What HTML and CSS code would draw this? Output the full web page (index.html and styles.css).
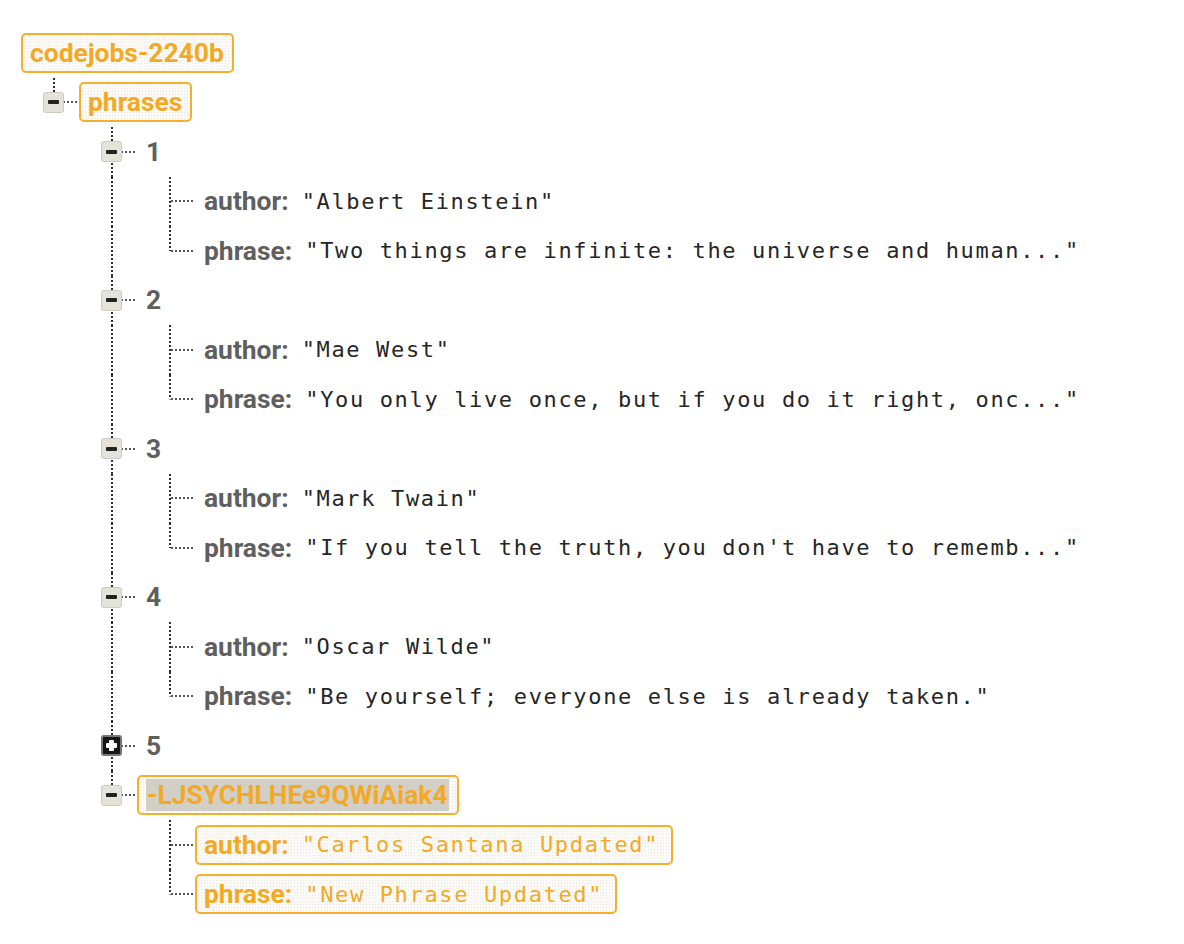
FILE: index.html
```html
<!DOCTYPE html>
<html>
<head>
<meta charset="utf-8">
<link rel="stylesheet" href="styles.css">
</head>
<body>
<div class="tree">
  <div class="row">
    <span class="label boxed"><span class="name">codejobs-2240b</span></span>
  </div>
  <div class="row">
    <div class="cell half"><span class="toggle"><span class="minus"></span></span></div>
    <span class="label boxed"><span class="name">phrases</span></span>
  </div>

  <div class="row">
    <div class="cell"></div>
    <div class="cell full"><span class="toggle"><span class="minus"></span></span></div>
    <span class="label"><span class="key">1</span></span>
  </div>
  <div class="row">
    <div class="cell"></div><div class="cell pipe"></div><div class="cell tee"></div>
    <span class="label"><span class="key">author:</span><span class="val">"Albert Einstein"</span></span>
  </div>
  <div class="row">
    <div class="cell"></div><div class="cell pipe"></div><div class="cell elbow"></div>
    <span class="label"><span class="key">phrase:</span><span class="val">"Two things are infinite: the universe and human..."</span></span>
  </div>

  <div class="row">
    <div class="cell"></div>
    <div class="cell full"><span class="toggle"><span class="minus"></span></span></div>
    <span class="label"><span class="key">2</span></span>
  </div>
  <div class="row">
    <div class="cell"></div><div class="cell pipe"></div><div class="cell tee"></div>
    <span class="label"><span class="key">author:</span><span class="val">"Mae West"</span></span>
  </div>
  <div class="row">
    <div class="cell"></div><div class="cell pipe"></div><div class="cell elbow"></div>
    <span class="label"><span class="key">phrase:</span><span class="val">"You only live once, but if you do it right, onc..."</span></span>
  </div>

  <div class="row">
    <div class="cell"></div>
    <div class="cell full"><span class="toggle"><span class="minus"></span></span></div>
    <span class="label"><span class="key">3</span></span>
  </div>
  <div class="row">
    <div class="cell"></div><div class="cell pipe"></div><div class="cell tee"></div>
    <span class="label"><span class="key">author:</span><span class="val">"Mark Twain"</span></span>
  </div>
  <div class="row">
    <div class="cell"></div><div class="cell pipe"></div><div class="cell elbow"></div>
    <span class="label"><span class="key">phrase:</span><span class="val">"If you tell the truth, you don't have to rememb..."</span></span>
  </div>

  <div class="row">
    <div class="cell"></div>
    <div class="cell full"><span class="toggle"><span class="minus"></span></span></div>
    <span class="label"><span class="key">4</span></span>
  </div>
  <div class="row">
    <div class="cell"></div><div class="cell pipe"></div><div class="cell tee"></div>
    <span class="label"><span class="key">author:</span><span class="val">"Oscar Wilde"</span></span>
  </div>
  <div class="row">
    <div class="cell"></div><div class="cell pipe"></div><div class="cell elbow"></div>
    <span class="label"><span class="key">phrase:</span><span class="val">"Be yourself; everyone else is already taken."</span></span>
  </div>

  <div class="row">
    <div class="cell"></div>
    <div class="cell full"><span class="toggle dark"><span class="minus"></span><span class="vbar"></span></span></div>
    <span class="label"><span class="key">5</span></span>
  </div>

  <div class="row">
    <div class="cell"></div>
    <div class="cell half"><span class="toggle"><span class="minus"></span></span></div>
    <span class="label boxed"><span class="name hl">-LJSYCHLHEe9QWiAiak4</span></span>
  </div>
  <div class="row">
    <div class="cell"></div><div class="cell"></div><div class="cell tee"></div>
    <span class="label boxed"><span class="key">author:</span><span class="val">"Carlos Santana Updated"</span></span>
  </div>
  <div class="row">
    <div class="cell"></div><div class="cell"></div><div class="cell elbow"></div>
    <span class="label boxed"><span class="key">phrase:</span><span class="val">"New Phrase Updated"</span></span>
  </div>
</div>
</body>
</html>
```

FILE: styles.css
```css
html, body {
  margin: 0;
  padding: 0;
  background: #ffffff;
}

body {
  font-family: Roboto, "Liberation Sans", sans-serif;
}

.tree {
  display: flex;
  flex-direction: column;
  padding: 28px 0 0 21px;
}

.row {
  display: flex;
  align-items: center;
  height: 49.5px;
}

.cell {
  --vline: repeating-linear-gradient(to bottom, #2e2e2e 0 2px, transparent 2px 4px);
  --hline: repeating-linear-gradient(to right, #555555 0 2px, transparent 2px 4px);
  flex: 0 0 58px;
  width: 58px;
  align-self: stretch;
  display: flex;
  align-items: center;
  padding-left: 22px;
  box-sizing: border-box;
  background-repeat: no-repeat;
}

.cell.pipe {
  background-image: var(--vline);
  background-size: 2px 100%;
  background-position: 32px 0;
}

.cell.tee,
.cell.full {
  background-image: var(--vline), var(--hline);
  background-size: 2px 100%, 24px 2px;
  background-position: 32px 0, 34px 50%;
}

.cell.elbow,
.cell.half {
  background-image: var(--vline), var(--hline);
  background-size: 2px 50%, 24px 2px;
  background-position: 32px 0, 34px 50%;
}

.toggle {
  width: 21px;
  height: 21px;
  box-sizing: border-box;
  border: 1px solid #cdcac2;
  border-radius: 3px;
  background: #e5e2da;
  display: flex;
  align-items: center;
  justify-content: center;
  position: relative;
}

.toggle .minus {
  width: 11px;
  height: 4px;
  background: #222222;
  border-radius: 1px;
}

.toggle.dark {
  background: #161616;
  border: 2px solid #777777;
}

.toggle.dark .minus {
  background: #ffffff;
  width: 11px;
  height: 5px;
}

.toggle.dark .vbar {
  position: absolute;
  left: 50%;
  top: 50%;
  width: 5px;
  height: 11px;
  margin: -5.5px 0 0 -2.5px;
  background: #ffffff;
  border-radius: 1px;
}

.label {
  display: inline-flex;
  align-items: center;
  height: 40px;
  box-sizing: border-box;
  border: 2px solid transparent;
  border-radius: 5px;
  padding: 0 8px 0 7px;
  white-space: pre;
}

.label.boxed {
  border-color: #f4af2c;
  background-color: #fbfaf6;
  background-image: radial-gradient(#ebe8e0 0.7px, transparent 0.9px);
  background-size: 3px 3px;
}

.name {
  font-weight: 700;
  font-size: 26.4px;
  color: #f4a925;
}

.name.hl {
  background: #d2cfc7;
  padding: 2px 1px;
  line-height: 28px;
}

.key {
  font-weight: 700;
  font-size: 26.4px;
  color: #5f5f5f;
  margin-right: 13px;
}

.val {
  font-family: "DejaVu Sans Mono", "Liberation Mono", monospace;
  font-size: 22px;
  letter-spacing: 1.65px;
  color: #262626;
}

.boxed .key,
.boxed .val {
  color: #f4a925;
}

.boxed .val {
  margin-right: 4px;
}
```
